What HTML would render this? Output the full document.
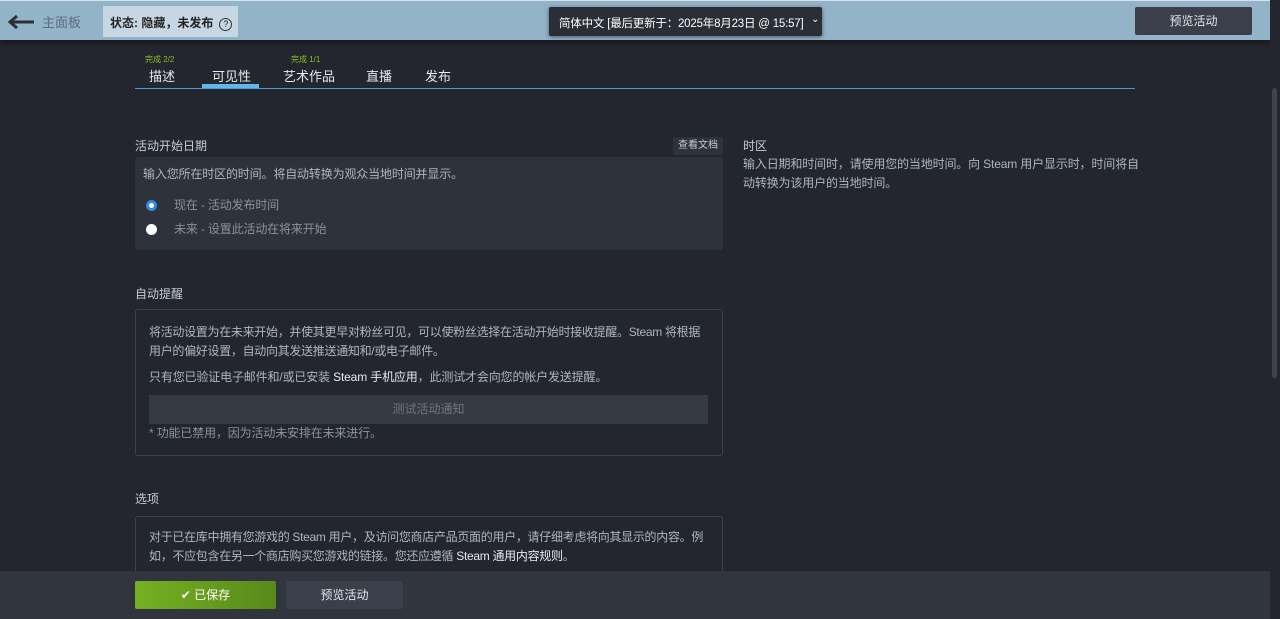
<!DOCTYPE html>
<html><head><meta charset="utf-8"><style>
*{box-sizing:border-box;margin:0;padding:0}
body{width:1280px;height:619px;overflow:hidden;background:#23262e;font-family:"Liberation Sans","Noto Sans CJK SC",sans-serif;color:#c6d4df;position:relative;font-size:12px}
.hdr{position:absolute;left:0;top:0;width:1270px;height:40px;background:#93b3c8;border-top:1px solid #d8e2ea;box-shadow:0 2px 6px rgba(0,0,0,.5)}
.back{position:absolute;left:8px;top:11px;color:#5d6c7a;font-size:13px;display:flex;align-items:center;gap:6px}
.status{position:absolute;left:103px;top:5px;width:135px;height:31px;background:#c6d6e2;color:#222;font-size:12px;font-weight:bold;padding:8px 0 0 7px;white-space:nowrap}
.status span{display:inline-block;width:13px;height:13px;border:1px solid #333;border-radius:50%;font-size:9px;text-align:center;line-height:11px;margin-left:6px;font-weight:normal}
.lang{position:absolute;left:549px;top:6px;width:273px;height:29px;background:#2a2e36;color:#fff;font-size:11.5px;padding:8px 0 0 10px;border-radius:2px;box-shadow:0 1px 4px rgba(0,0,0,.5);white-space:nowrap;letter-spacing:-0.2px}
.prev{position:absolute;left:1135px;top:6px;width:117px;height:28px;background:#3a3f4a;color:#e0e6ec;font-size:12px;text-align:center;line-height:28px;border-radius:2px}
.tabs{position:absolute;left:135px;top:0;width:1000px;height:89px;border-bottom:1px solid #4b9bd0}
.tab{position:absolute;top:66px;font-size:13px;color:#e6eaee}
.done{position:absolute;top:54px;font-size:8px;color:#8bbf20}
.ul{position:absolute;left:202px;top:84px;width:57px;height:4px;background:#63b6ea}
.lbl{position:absolute;font-size:12px;color:#c6ccd2}
.box1{position:absolute;left:135px;top:157px;width:588px;height:93px;background:#2e323b;border-radius:3px}
.docs{position:absolute;left:673px;top:137px;width:50px;height:18px;background:#2e323b;font-size:10px;color:#c6ccd2;text-align:center;line-height:18px}
.t{position:absolute;font-size:12px;color:#aeb6be;line-height:19px;letter-spacing:-0.15px}
.radio{position:absolute;width:11px;height:11px;border-radius:50%}
.box2{position:absolute;left:135px;top:309px;width:588px;height:147px;border:1px solid #3c414a;border-radius:3px}
.btn2{position:absolute;left:149px;top:395px;width:559px;height:29px;background:#353a43;color:#6e767e;text-align:center;line-height:29px;font-size:12px}
.box3{position:absolute;left:135px;top:516px;width:588px;height:80px;border:1px solid #3c414a;border-radius:3px}
.foot{position:absolute;left:0;top:571px;width:1270px;height:48px;background:#31353e}
.save{position:absolute;left:135px;top:581px;width:141px;height:28px;background:linear-gradient(90deg,#75b022,#588a1b);color:#fff;text-align:center;line-height:28px;font-size:12px;border-radius:2px}
.pv2{position:absolute;left:286px;top:581px;width:117px;height:28px;background:#3a3f4a;color:#e0e6ec;text-align:center;line-height:28px;font-size:12px;border-radius:2px}
.sb{position:absolute;left:1270px;top:0;width:10px;height:619px;background:#23262e}
.sb div{position:absolute;left:2px;top:88px;width:5px;height:290px;background:#3f444c;border-radius:3px}
b.w{color:#e6eaee;font-weight:normal}
</style></head><body>
<div class="hdr">
<div class="back"><svg width="28" height="16" viewBox="0 0 28 16"><path d="M9 2L2 8l7 6M2 8h24" stroke="#2b3038" stroke-width="3" fill="none"/></svg>主面板</div>
<div class="status">状态: 隐藏，未发布<span>?</span></div>
<div class="lang">简体中文 [最后更新于：2025年8月23日 @ 15:57] <span style="position:absolute;left:262px;top:7px;font-size:10px">⌄</span></div>
<div class="prev">预览活动</div>
</div>
<div class="tabs"></div>
<div class="done" style="left:145px">完成 2/2</div>
<div class="done" style="left:291px">完成 1/1</div>
<div class="tab" style="left:149px">描述</div>
<div class="tab" style="left:212px">可见性</div>
<div class="tab" style="left:283px">艺术作品</div>
<div class="tab" style="left:366px">直播</div>
<div class="tab" style="left:425px">发布</div>
<div class="ul"></div>

<div class="lbl" style="left:135px;top:137px">活动开始日期</div>
<div class="docs">查看文档</div>
<div class="box1"></div>
<div class="t" style="left:143px;top:165px">输入您所在时区的时间。将自动转换为观众当地时间并显示。</div>
<div class="radio" style="left:146px;top:200px;background:#fff;border:3px solid #2f8ae0"></div>
<div class="t" style="left:174px;top:196px;color:#8a929a">现在 - 活动发布时间</div>
<div class="radio" style="left:146px;top:224px;background:#fff"></div>
<div class="t" style="left:174px;top:220px;color:#8a929a">未来 - 设置此活动在将来开始</div>

<div class="lbl" style="left:743px;top:137px">时区</div>
<div class="t" style="left:743px;top:155px;width:400px">输入日期和时间时，请使用您的当地时间。向 Steam 用户显示时，时间将自动转换为该用户的当地时间。</div>

<div class="lbl" style="left:135px;top:285px">自动提醒</div>
<div class="box2"></div>
<div class="t" style="left:149px;top:323px;width:552px;letter-spacing:-0.3px">将活动设置为在未来开始，并使其更早对粉丝可见，可以使粉丝选择在活动开始时接收提醒。Steam 将根据用户的偏好设置，自动向其发送推送通知和/或电子邮件。</div>
<div class="t" style="left:149px;top:368px">只有您已验证电子邮件和/或已安装 <b class="w">Steam 手机应用</b>，此测试才会向您的帐户发送提醒。</div>
<div class="btn2">测试活动通知</div>
<div class="t" style="left:149px;top:424px;color:#8a929a">* 功能已禁用，因为活动未安排在未来进行。</div>

<div class="lbl" style="left:135px;top:490px">选项</div>
<div class="box3"></div>
<div class="t" style="left:149px;top:528px;width:565px;letter-spacing:-0.3px">对于已在库中拥有您游戏的 Steam 用户，及访问您商店产品页面的用户，请仔细考虑将向其显示的内容。例如，不应包含在另一个商店购买您游戏的链接。您还应遵循 <b class="w">Steam 通用内容规则</b>。</div>

<div class="foot"></div>
<div class="save">✔ 已保存</div>
<div class="pv2">预览活动</div>
<div class="sb"><div></div></div>
</body></html>
